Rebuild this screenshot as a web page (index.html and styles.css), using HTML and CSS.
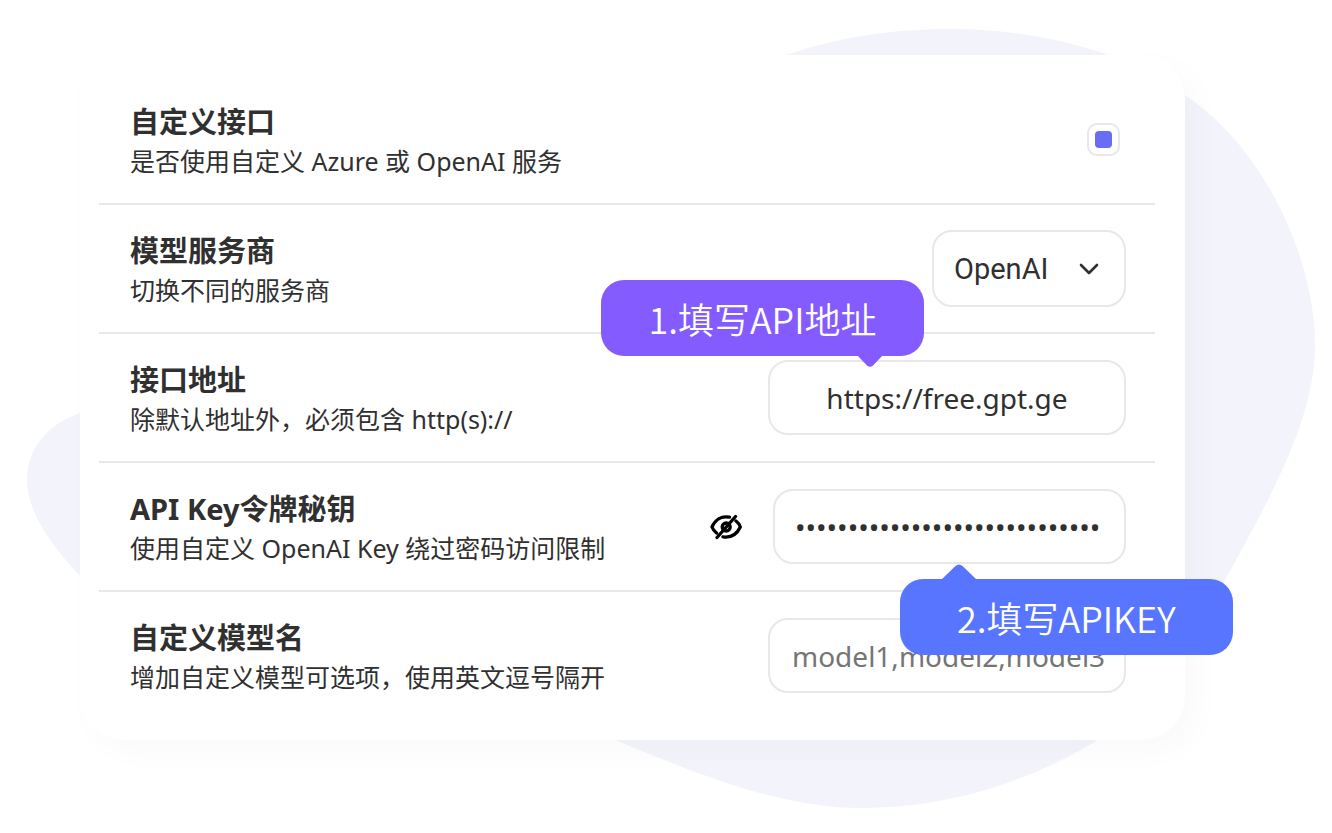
FILE: index.html
```html
<!DOCTYPE html>
<html lang="zh-CN">
<head>
<meta charset="utf-8">
<meta name="viewport" content="width=device-width, initial-scale=1">
<title>自定义接口</title>
<link rel="stylesheet" href="styles.css">
</head>
<body>
<main class="scene">
  <svg class="blob" viewBox="0 0 1332 833" preserveAspectRatio="none" aria-hidden="true">
    <path d="M27 480C27 448 48 424 80 413C250 370 480 180 787 55C835 38 890 29 950 29C1005 29 1060 38 1108 55C1136 67 1162 80 1185 95C1212 113 1233 135 1251 160C1286 208 1315 278 1315 346C1315 415 1275 490 1225 580C1195 640 1160 700 1098 740C1040 775 960 808 862 808C780 808 700 775 615 740C400 680 180 690 80 576C48 542 27 510 27 480Z"/>
  </svg>
  <form class="card">
    <div class="row">
      <div class="label">
        <label class="title" for="custom">自定义接口</label>
        <p class="desc">是否使用自定义 Azure 或 OpenAI 服务</p>
      </div>
      <input class="check" id="custom" type="checkbox" checked>
    </div>
    <div class="row">
      <div class="label">
        <label class="title" for="provider">模型服务商</label>
        <p class="desc">切换不同的服务商</p>
      </div>
      <div class="field field-select">
        <select class="control select" id="provider">
          <option>OpenAI</option>
          <option>Azure</option>
        </select>
        <svg class="chevron" viewBox="0 0 20 12" aria-hidden="true"><path d="M2 2l8 8 8-8"/></svg>
      </div>
    </div>
    <div class="row">
      <div class="label">
        <label class="title" for="endpoint">接口地址</label>
        <p class="desc">除默认地址外，必须包含 http(s)://</p>
      </div>
      <div class="field field-text">
        <input class="control endpoint" id="endpoint" type="text" value="https://free.gpt.ge">
        <div class="callout callout-url">1.填写API地址
          <svg class="tip tip-down" viewBox="0 0 34 15" aria-hidden="true"><path d="M2 0H32L20 12.500Q17 15 14 12.500Z"/></svg>
        </div>
      </div>
    </div>
    <div class="row">
      <div class="label">
        <label class="title" for="key">API Key令牌秘钥</label>
        <p class="desc">使用自定义 OpenAI Key 绕过密码访问限制</p>
      </div>
      <button class="eye" type="button" aria-label="显示密钥">
        <svg viewBox="0 0 32 26" aria-hidden="true">
          <path d="M19.500 3.200C11 1.500 5 6 2 13C3 15.500 4.500 17.500 6.500 19M26 7C28 8.500 29.500 10.500 30.300 13C27 20 21 24 13 22.800M7 23.500L25.500 2.500"/>
          <circle cx="16.200" cy="13" r="4"/>
        </svg>
      </button>
      <div class="field field-key">
        <input class="control key" id="key" type="password" value="sk-0123456789abcdefghijklmnop">
        <div class="callout callout-key">2.填写APIKEY
          <svg class="tip tip-up" viewBox="0 0 34 15" aria-hidden="true"><path d="M0 15H34L20.500 2Q17-1 13.500 2Z"/></svg>
        </div>
      </div>
    </div>
    <div class="row">
      <div class="label">
        <label class="title" for="models">自定义模型名</label>
        <p class="desc">增加自定义模型可选项，使用英文逗号隔开</p>
      </div>
      <div class="field field-text">
        <input class="control" id="models" type="text" placeholder="model1,model2,model3">
      </div>
    </div>
  </form>
</main>
</body>
</html>
```
FILE: styles.css
```css
* {
  box-sizing: border-box;
}

body {
  margin: 0;
  background: #fff;
  color: #303030;
  font-family: "Noto Sans", "Noto Sans CJK SC", sans-serif;
}

.scene {
  position: relative;
  min-height: 100vh;
  padding: 55px 147px 93px 80px;
}

.blob {
  position: absolute;
  inset: 0;
  width: 100%;
  height: 100%;
  fill: #f3f3fc;
}

.card {
  position: relative;
  padding: 21px 30px 21px 19px;
  border-radius: 0 44px 44px 44px;
  background: #fff;
  box-shadow: 12px 12px 32px rgba(0, 0, 0, 0.025);
}

.row {
  display: flex;
  align-items: center;
  min-height: 129px;
  padding: 0 29px 0 31px;
  border-bottom: 2px solid #e8e8e8;
}

.row:last-child {
  min-height: 127px;
  border-bottom: 0;
}

.label {
  flex: 1;
}

.title {
  display: block;
  font-size: 29px;
  font-weight: 700;
  line-height: 42px;
}

.desc {
  margin: 0;
  font-size: 25px;
  line-height: 36px;
}

.field {
  position: relative;
}

.field-select {
  width: 194px;
}

.field-text {
  width: 358px;
}

.field-key {
  width: 353px;
}

.control {
  display: block;
  width: 100%;
  height: 75px;
  padding: 0 20px 0 22px;
  border: 2px solid #e8e8e8;
  border-radius: 20px;
  outline: 0;
  background: #fff;
  color: #303030;
  font-family: inherit;
  font-size: 28px;
}

.control::placeholder {
  color: #757575;
}

.select {
  height: 77px;
  padding: 0 20px;
  appearance: none;
  font-family: Roboto, sans-serif;
  font-size: 29px;
}

.chevron {
  position: absolute;
  top: 33px;
  right: 27px;
  width: 20px;
  height: 12px;
  fill: none;
  stroke: #303030;
  stroke-width: 2.6;
  stroke-linecap: round;
  stroke-linejoin: round;
  pointer-events: none;
}

.endpoint {
  padding: 0 20px;
  text-align: center;
}

.check {
  width: 33px;
  height: 33px;
  margin: 0 6px 0 0;
  padding: 6px;
  appearance: none;
  border: 2px solid #e8e8e8;
  border-radius: 10px;
  background: #fff;
}

.check:checked::before {
  content: "";
  display: block;
  height: 17px;
  border-radius: 4px;
  background: #696df5;
}

.key {
  padding: 0 20px;
}

.eye {
  display: flex;
  margin: 0 31px 0 0;
  padding: 0;
  border: 0;
  background: none;
}

.eye svg {
  width: 32px;
  height: 26px;
  fill: none;
  stroke: #000;
  stroke-width: 3.3;
  stroke-linecap: round;
}

.callout {
  position: absolute;
  z-index: 1;
  height: 76px;
  border-radius: 23px;
  color: #fff;
  font-family: "Noto Sans CJK SC DemiLight", "Noto Sans CJK SC", sans-serif;
  font-size: 36px;
  font-weight: 350;
  line-height: 76px;
  text-align: center;
  white-space: nowrap;
}

.callout-url {
  right: 202px;
  bottom: calc(100% + 4px);
  width: 323px;
  background: #835bff;
}

.callout-key {
  top: calc(100% + 15px);
  right: -107px;
  width: 333px;
  background: #5875ff;
}

.tip {
  position: absolute;
  width: 34px;
  height: 15px;
}

.tip-down {
  top: calc(100% - 3px);
  right: 37px;
  fill: #835bff;
}

.tip-up {
  bottom: 100%;
  left: 42px;
  fill: #5875ff;
}
```
